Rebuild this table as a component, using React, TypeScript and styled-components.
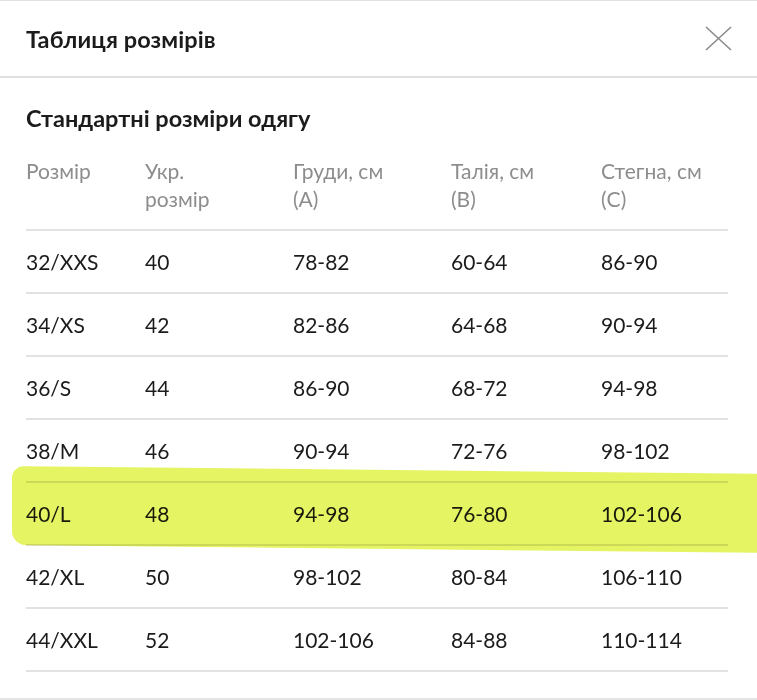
import React from "react";
import styled, { createGlobalStyle } from "styled-components";

const Global = createGlobalStyle`
  html, body { margin: 0; padding: 0; background: #fff; }
  body { font-family: Lato, "Noto Sans", sans-serif; color: #1b1b1b; }
`;

const Page = styled.div`
  width: 757px;
  height: 700px;
  overflow: hidden;
  border-top: 1px solid #e2e2e2;
  border-bottom: 2px solid #e4e4e4;
  box-sizing: border-box;
  display: flex;
  flex-direction: column;
`;

const Header = styled.header`
  height: 75px;
  flex: none;
  display: flex;
  align-items: center;
  justify-content: space-between;
  padding: 0 25px 0 26px;
  border-bottom: 2px solid #e0e0e0;
`;

const Title = styled.h1`
  margin: 0;
  font-size: 23.5px;
  font-weight: 700;
  letter-spacing: 0.1px;
`;

const Close = styled.button`
  border: 0;
  background: none;
  padding: 0;
  width: 28px;
  height: 28px;
  display: flex;
  align-items: center;
  justify-content: center;
  cursor: pointer;
`;

const Section = styled.section`
  padding: 26px 29px 0 26px;
`;

const SectionTitle = styled.h2`
  margin: 0 0 25px;
  font-size: 23.5px;
  line-height: 28px;
  font-weight: 700;
`;

const Row = styled.div<{ $head?: boolean; $marked?: boolean }>`
  position: relative;
  display: grid;
  grid-template-columns: 119px 148px 158px 150px 1fr;
  align-items: ${(p) => (p.$head ? "start" : "center")};
  height: ${(p) => (p.$head ? "auto" : "61px")};
  padding-bottom: ${(p) => (p.$head ? "16px" : "0")};
  border-bottom: 2px solid #e2e2e2;
  font-size: 21px;
  line-height: 28px;
  color: ${(p) => (p.$head ? "#8d8d8d" : "#1b1b1b")};
  ${(p) =>
    p.$marked &&
    `
    &::after {
      content: "";
      position: absolute;
      top: -13px;
      bottom: -5px;
      left: -14px;
      right: -40px;
      background: #e5f463;
      mix-blend-mode: multiply;
      border-radius: 12px 0 0 14px;
      transform: skewY(0.6deg);
      pointer-events: none;
    }
  `}
`;

const Cell = styled.div`
  white-space: pre-line;
`;

const headers = ["Розмір", "Укр.\nрозмір", "Груди, см\n(A)", "Талія, см\n(B)", "Стегна, см\n(C)"];

const rows = [
  ["32/XXS", "40", "78-82", "60-64", "86-90"],
  ["34/XS", "42", "82-86", "64-68", "90-94"],
  ["36/S", "44", "86-90", "68-72", "94-98"],
  ["38/M", "46", "90-94", "72-76", "98-102"],
  ["40/L", "48", "94-98", "76-80", "102-106"],
  ["42/XL", "50", "98-102", "80-84", "106-110"],
  ["44/XXL", "52", "102-106", "84-88", "110-114"],
];

export default function App() {
  return (
    <>
      <Global />
      <Page>
        <Header>
          <Title>Таблиця розмірів</Title>
          <Close aria-label="Закрити">
            <svg width="27" height="25" viewBox="0 0 27 25">
              <path d="M1 1 L26 24 M26 1 L1 24" stroke="#8a8a8a" strokeWidth="1.6" fill="none" />
            </svg>
          </Close>
        </Header>
        <Section>
          <SectionTitle>Стандартні розміри одягу</SectionTitle>
          <Row $head>
            {headers.map((h) => (
              <Cell key={h}>{h}</Cell>
            ))}
          </Row>
          {rows.map((r) => (
            <Row key={r[0]} $marked={r[0] === "40/L"}>
              {r.map((c, i) => (
                <Cell key={i}>{c}</Cell>
              ))}
            </Row>
          ))}
        </Section>
      </Page>
    </>
  );
}
